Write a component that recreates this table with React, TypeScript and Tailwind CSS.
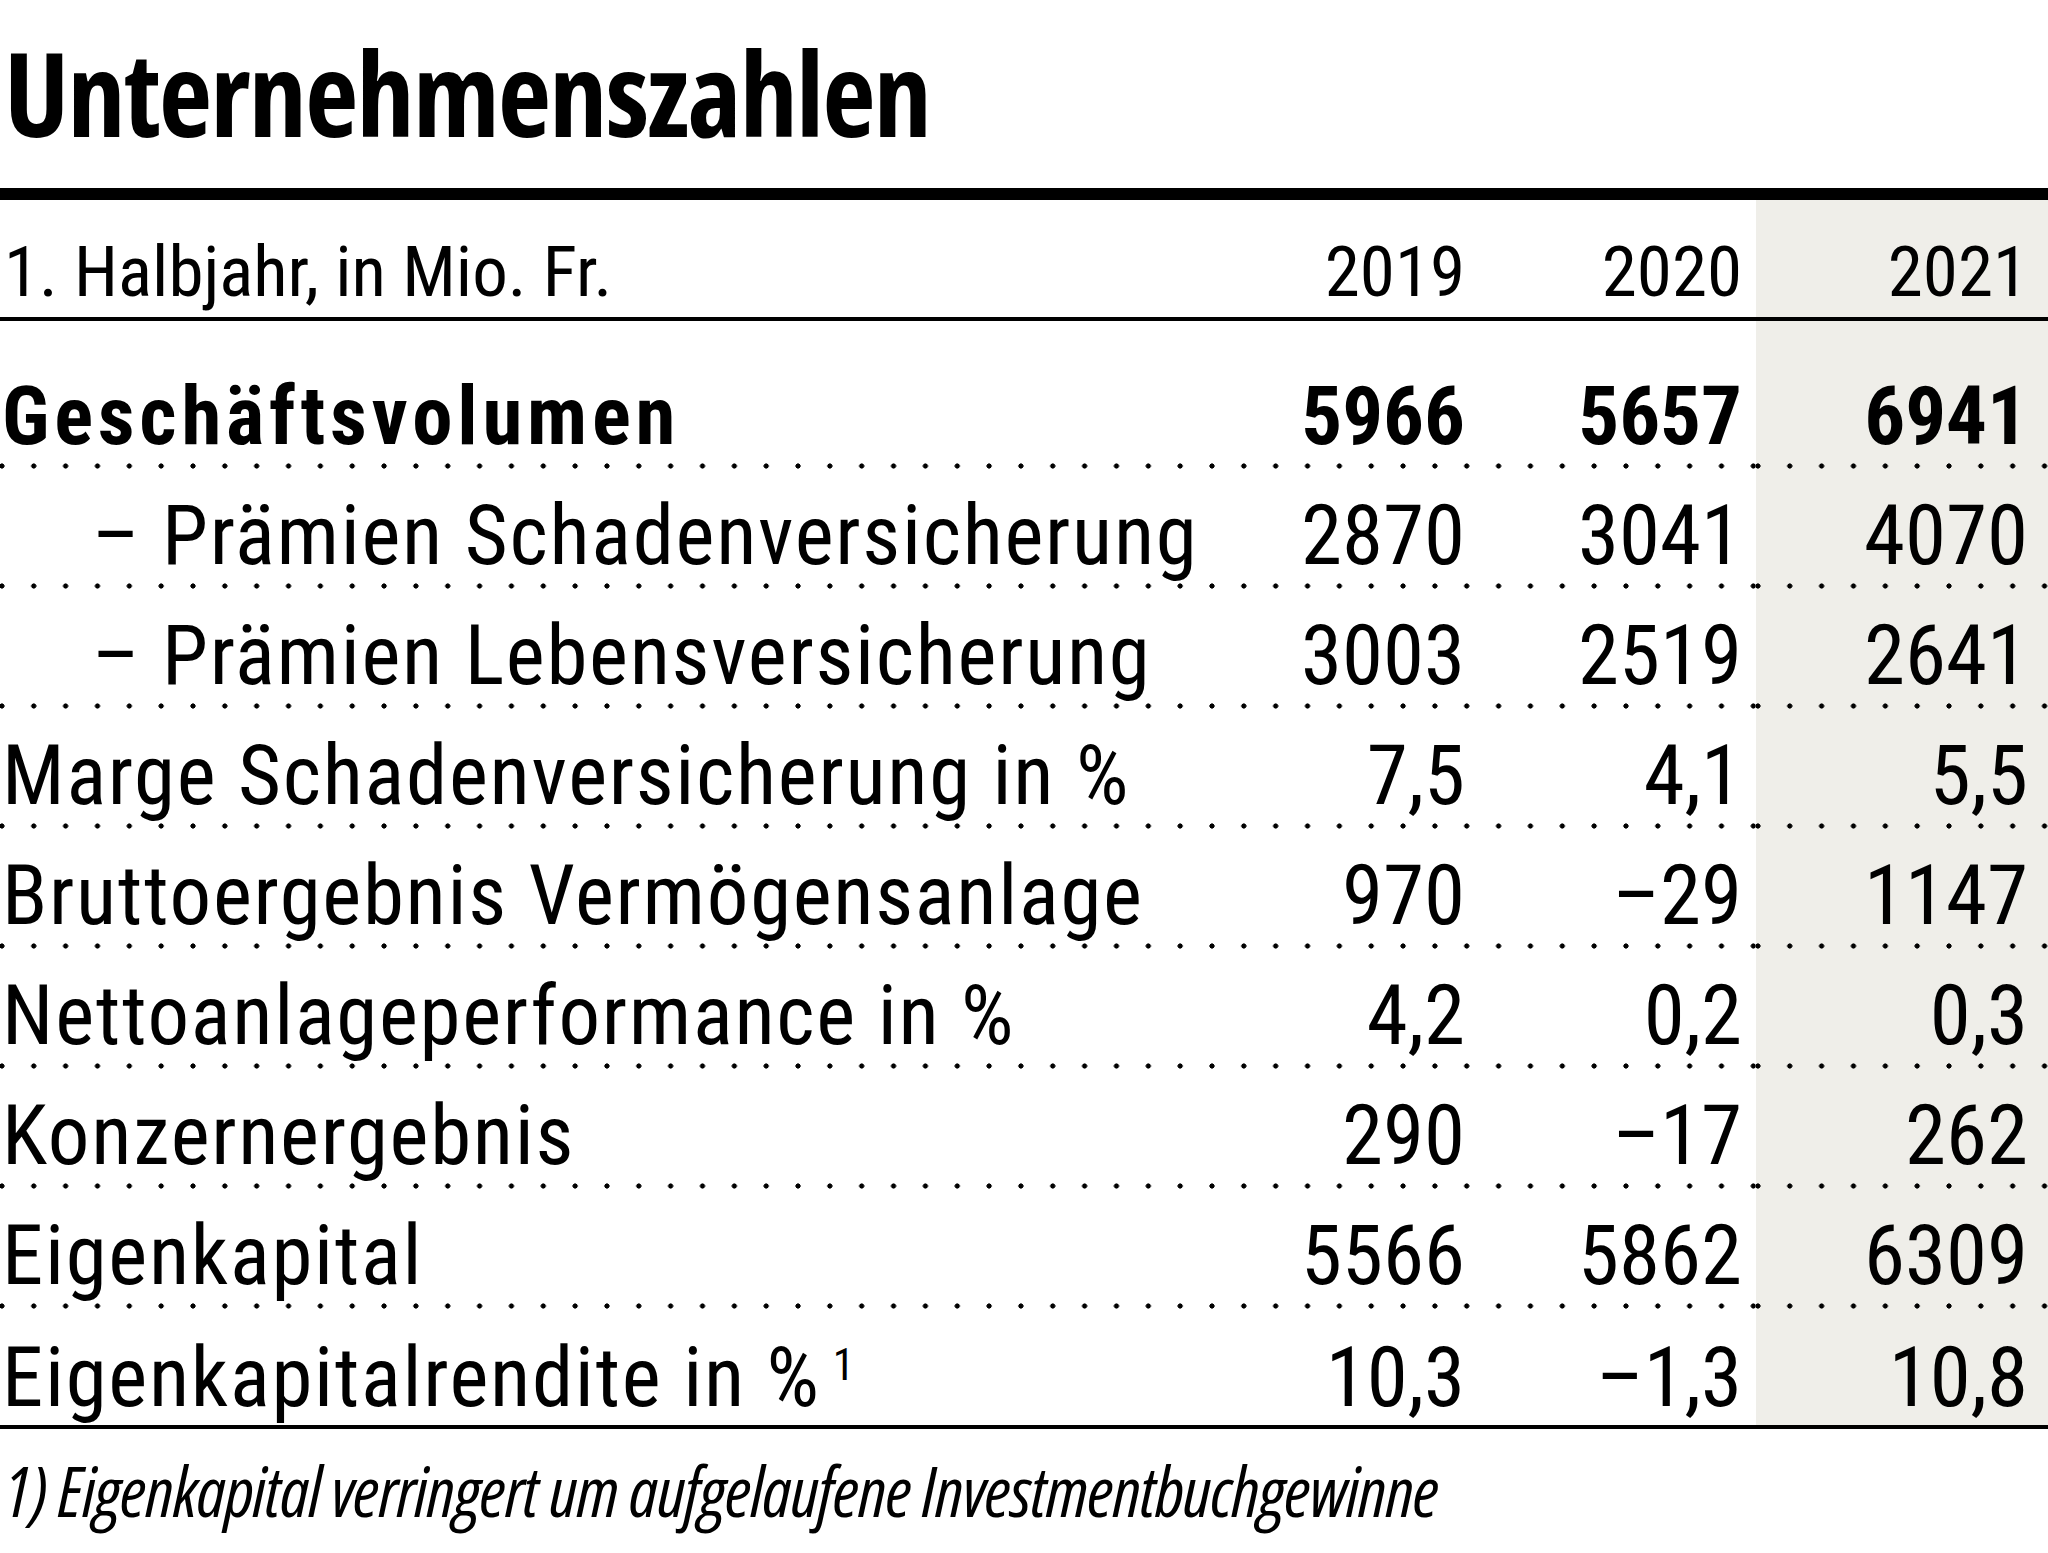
const dots =
  "bg-[image:radial-gradient(circle,#000_2.3px,transparent_2.9px)] bg-[length:31.85px_6px] bg-[position:-14px_100%] bg-repeat-x";

type Row = {
  label: string;
  values: [string, string, string];
  bold?: boolean;
  indent?: boolean;
  note?: boolean;
};

const rows: Row[] = [
  { label: "Geschäftsvolumen", values: ["5966", "5657", "6941"], bold: true },
  { label: "– Prämien Schadenversicherung", values: ["2870", "3041", "4070"], indent: true },
  { label: "– Prämien Lebensversicherung", values: ["3003", "2519", "2641"], indent: true },
  { label: "Marge Schadenversicherung in %", values: ["7,5", "4,1", "5,5"] },
  { label: "Bruttoergebnis Vermögensanlage", values: ["970", "–29", "1147"] },
  { label: "Nettoanlageperformance in %", values: ["4,2", "0,2", "0,3"] },
  { label: "Konzernergebnis", values: ["290", "–17", "262"] },
  { label: "Eigenkapital", values: ["5566", "5862", "6309"] },
  { label: "Eigenkapitalrendite in %", values: ["10,3", "–1,3", "10,8"], note: true },
];

const TableRow = ({ row, index }: { row: Row; index: number }) => {
  const first = index === 0;
  const last = index === rows.length - 1;
  const text = row.bold ? "text-[81px] font-bold" : "text-[83px]";
  const pad = last ? "pb-[6px]" : "pb-[12px]";
  return (
    <div
      className={`grid grid-cols-[minmax(0,1fr)_276px_291px_292px] leading-none ${first ? "h-[148px]" : "h-[120px]"} ${
        last ? "border-b-4 border-black" : dots
      }`}
    >
      <div
        className={`flex items-end whitespace-nowrap ${pad} ${row.indent ? "pl-[92px]" : "pl-[2px]"} ${text} ${
          row.bold ? "tracking-[4.8px]" : "tracking-[1.7px]"
        }`}
      >
        <span>
          {row.label}
          {row.note && <sup className="relative -top-[26px] ml-[12px] text-[44px] tracking-normal">1</sup>}
        </span>
      </div>
      <div className={`flex items-end justify-end ${pad} ${text}`}>{row.values[0]}</div>
      <div className={`flex items-end justify-end pr-[14px] ${pad} ${text}`}>{row.values[1]}</div>
      <div className={`flex items-end justify-end bg-[#efeee9] pr-[20px] ${pad} ${text} ${last ? "" : dots}`}>
        {row.values[2]}
      </div>
    </div>
  );
};

const App = () => {
  return (
    <div className="min-h-[1553px] w-full bg-white text-black font-['Roboto',sans-serif] font-stretch-condensed">
      <div className="flex h-[188px] items-end pb-[38px] pl-[4px] font-['Open_Sans',sans-serif]">
        <h1 className="text-[116px] leading-none font-bold tracking-[-1.7px]">Unternehmenszahlen</h1>
      </div>
      <div className="h-[12px] bg-black" />

      <div className="grid h-[121px] grid-cols-[minmax(0,1fr)_276px_291px_292px] border-b-4 border-black text-[71px] leading-none">
        <div className="flex items-end whitespace-nowrap pb-[10px] pl-[4px]">1. Halbjahr, in Mio. Fr.</div>
        <div className="flex items-end justify-end pb-[10px]">2019</div>
        <div className="flex items-end justify-end pb-[10px] pr-[14px]">2020</div>
        <div className="flex items-end justify-end bg-[#efeee9] pb-[10px] pr-[20px]">2021</div>
      </div>

      {rows.map((row, i) => (
        <TableRow key={row.label} row={row} index={i} />
      ))}

      <p className="pt-[26px] pl-[4px] font-['Open_Sans',sans-serif] text-[70px] leading-none italic tracking-[-1px]">
        1) Eigenkapital verringert um aufgelaufene Investmentbuchgewinne
      </p>
    </div>
  );
};

export default App;
